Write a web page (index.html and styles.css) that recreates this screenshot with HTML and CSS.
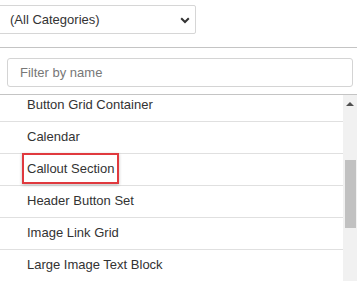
FILE: index.html
```html
<!DOCTYPE html>
<html lang="en">
<head>
  <meta charset="UTF-8">
  <title>Component Picker</title>
  <link rel="stylesheet" href="styles.css">
</head>
<body>
  <div class="category-bar">
    <div class="category-select">
      <span class="category-select__value">(All Categories)</span>
      <svg class="category-select__chevron" width="10" height="7" viewBox="0 0 10 7">
        <path d="M1.2 1.3 L5 5 L8.8 1.3" fill="none" stroke="#333" stroke-width="2"/>
      </svg>
    </div>
  </div>

  <div class="filter-bar">
    <div class="filter-input">Filter by name</div>
  </div>

  <div class="component-list">
    <div class="component-list__viewport">
      <ul class="component-list__items">
        <li class="item">Button Grid Container</li>
        <li class="item">Calendar</li>
        <li class="item item--marked"><span class="item__label">Callout Section</span></li>
        <li class="item">Header Button Set</li>
        <li class="item">Image Link Grid</li>
        <li class="item">Large Image Text Block</li>
      </ul>
    </div>
    <div class="scrollbar">
      <div class="scrollbar__arrow"></div>
      <div class="scrollbar__track">
        <div class="scrollbar__thumb"></div>
      </div>
    </div>
  </div>
</body>
</html>
```

FILE: styles.css
```css
body {
  margin: 0;
  background: #fff;
  font-family: "Liberation Sans", Arial, sans-serif;
  font-size: 13px;
  color: #333;
  height: 281px;
  overflow: hidden;
  display: flex;
  flex-direction: column;
}

.category-bar {
  padding: 5px 0 13px;
  border-bottom: 1px solid #c4c4c4;
}

.category-select {
  width: 200px;
  height: 29px;
  margin-left: -4px;
  box-sizing: border-box;
  border: 1px solid #d6d6d6;
  border-radius: 2px;
  padding: 0 5px 0 13px;
  display: flex;
  align-items: center;
  justify-content: space-between;
}

.category-select__chevron {
  display: block;
  margin-top: 1px;
}

.filter-bar {
  padding: 10px 4px 7px 7px;
}

.filter-input {
  height: 29px;
  box-sizing: border-box;
  border: 1px solid #d4d4d4;
  border-radius: 3px;
  padding: 0 12px;
  display: flex;
  align-items: center;
  color: #777;
}

.component-list {
  flex: 1;
  min-height: 0;
  border-top: 1px solid #c4c4c4;
  display: flex;
}

.component-list__viewport {
  flex: 1;
  overflow: hidden;
}

.component-list__items {
  list-style: none;
  margin: -5px 0 0;
  padding: 0;
}

.item {
  height: 29px;
  padding: 0 0 2px 27px;
  border-bottom: 1px solid #e0e0e0;
  display: flex;
  align-items: center;
}

.item--marked {
  padding-left: 22px;
}

.item__label {
  border: 2px solid #e0393e;
  padding: 0 3px;
  line-height: 27px;
  margin-top: -1px;
  box-shadow: 0 1px 3px rgba(0, 0, 0, 0.25);
}

.scrollbar {
  width: 14px;
  background: #f1f1f1;
  display: flex;
  flex-direction: column;
}

.scrollbar__arrow {
  height: 16px;
  display: flex;
  align-items: center;
  justify-content: center;
}

.scrollbar__arrow::before {
  content: "";
  border-left: 4px solid transparent;
  border-right: 4px solid transparent;
  border-bottom: 4px solid #505050;
  margin-top: 2px;
}

.scrollbar__track {
  flex: 1;
  padding: 49px 1px 0 2px;
}

.scrollbar__thumb {
  height: 68px;
  background: #c1c1c1;
}
```
